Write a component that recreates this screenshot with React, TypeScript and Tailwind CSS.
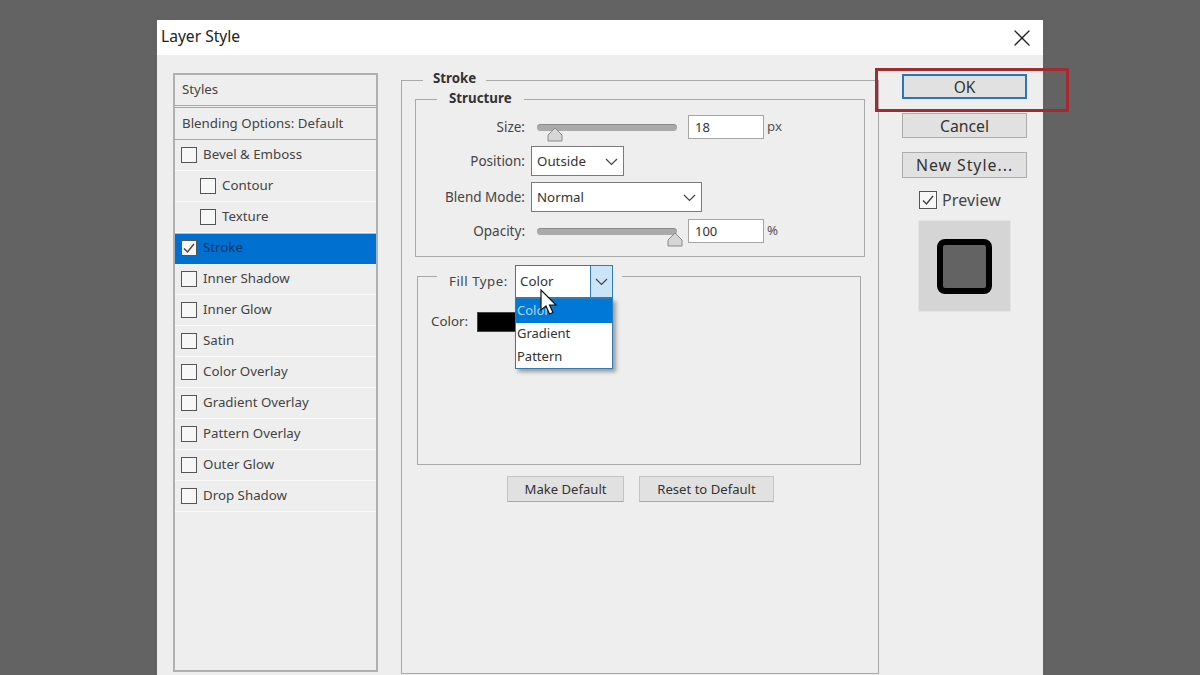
import { X } from 'lucide-react';

const font = 'font-["Noto_Sans",sans-serif]';

interface StyleRow {
  label: string;
  indent?: boolean;
  checked?: boolean;
  active?: boolean;
}

const rows: StyleRow[] = [
  { label: 'Bevel & Emboss' },
  { label: 'Contour', indent: true },
  { label: 'Texture', indent: true },
  { label: 'Stroke', checked: true, active: true },
  { label: 'Inner Shadow' },
  { label: 'Inner Glow' },
  { label: 'Satin' },
  { label: 'Color Overlay' },
  { label: 'Gradient Overlay' },
  { label: 'Pattern Overlay' },
  { label: 'Outer Glow' },
  { label: 'Drop Shadow' },
];

const Check = ({ checked, size = 'h-[16px] w-[16px]' }: { checked?: boolean; size?: string }) => (
  <span className={`flex shrink-0 items-center justify-center border border-[#555555] bg-[#f7f7f7] ${size}`}>
    {checked && (
      <svg width="14" height="14" viewBox="0 0 14 14" fill="none">
        <path d="M2 7.5 L5.5 11 L12 3" stroke="#444444" strokeWidth="1.4" />
      </svg>
    )}
  </span>
);

const Chevron = () => (
  <svg width="13" height="8" viewBox="0 0 13 8" fill="none">
    <path d="M1 1 L6.5 6.5 L12 1" stroke="#444444" strokeWidth="1.2" />
  </svg>
);

const StyleItem = ({ row }: { row: StyleRow }) => (
  <div
    className={`flex h-[31px] items-center border-b ${row.indent ? 'pl-[25px]' : 'pl-[6px]'} ${
      row.active
        ? 'border-[#0070d0] border-t border-t-[#8cc8f0] bg-[#0070d0] pb-[1px] text-[#12345f]'
        : 'border-[#fafafa] text-[#444444]'
    }`}
  >
    <Check checked={row.checked} />
    <span className="ml-[6px]">{row.label}</span>
  </div>
);

const Slider = ({ thumb }: { thumb: 'left' | 'right' }) => (
  <div className="relative ml-[12px] h-[7px] w-[140px] rounded-full border-t border-[#8a8a8a] bg-[#aaaaaa]">
    <svg
      className={`absolute top-[2px] ${thumb === 'left' ? 'left-[10px]' : 'left-[130px] top-[3px]'}`}
      width="16"
      height="15"
      viewBox="0 0 16 15"
    >
      <path d="M8 1 L15 8 V14 H1 V8 Z" fill="#d6d6d6" stroke="#8a8a8a" />
    </svg>
  </div>
);

const Field = ({ value, unit }: { value: string; unit: string }) => (
  <>
    <div className="ml-[11px] flex h-[24px] w-[76px] items-center border border-[#a5a5a5] bg-white pl-[6px] pt-[1px] text-[13px] text-[#333333]">
      {value}
    </div>
    <span className="ml-[3px] text-[#555555]">{unit}</span>
  </>
);

const Label = ({ children }: { children: string }) => (
  <span className="w-[109px] shrink-0 text-right text-[13.5px] text-[#444444]">{children}</span>
);

const Select = ({ value, width }: { value: string; width: string }) => (
  <div className={`ml-[6px] flex h-[30px] items-center justify-between border border-[#7a7a7a] bg-white pl-[5px] pr-[5px] pt-[2px] text-[#333333] ${width}`}>
    {value}
    <Chevron />
  </div>
);

const PushButton = ({ label, className }: { label: string; className: string }) => (
  <div className={`flex items-center justify-center border bg-[#e1e1e1] text-[#333333] ${className}`}>{label}</div>
);

export default function App() {
  return (
    <div className={`relative h-[675px] w-[1200px] overflow-hidden bg-[#636363] pl-[157px] pt-[20px] text-[13.3px] ${font}`}>
      <div className="flex h-[655px] w-[886px] flex-col bg-[#eeeeee]">
        <div className="flex h-[35px] shrink-0 items-center justify-between bg-white pl-[4px] pr-[7px]">
          <span className="pb-[2px] text-[15.6px] text-[#222222]">Layer Style</span>
          <X size={28} strokeWidth={1.1} className="text-[#222222]" />
        </div>

        <div className="flex flex-1">
          {/* styles list */}
          <div className="ml-[16px] mt-[18px] h-[599px] w-[205px] border-2 border-[#b0b0b0]">
            <div className="flex h-[33px] items-center border-b-[3px] border-double border-[#a8a8a8] pl-[7px] text-[#444444]">Styles</div>
            <div className="flex h-[32px] items-center border-b border-[#a8a8a8] pl-[7px] text-[#444444]">Blending Options: Default</div>
            {rows.map((row) => (
              <StyleItem key={row.label} row={row} />
            ))}
          </div>

          {/* stroke panel */}
          <div className="ml-[23px] mt-[17px] w-[478px]">
            <fieldset className="h-[602px] border border-[#a8a8a8]">
              <legend className="ml-[21px] h-[16px] px-[10px] font-bold leading-[12px] text-[#333333]">Stroke</legend>

              <fieldset className="ml-[13px] mt-[3px] h-[166px] w-[450px] border border-[#a8a8a8]">
                <legend className="ml-[21px] h-[16px] px-[12px] font-bold leading-[14px] text-[#333333]">Structure</legend>
                <div className="mt-[8px] flex h-[24px] items-center">
                  <Label>Size:</Label>
                  <Slider thumb="left" />
                  <Field value="18" unit="px" />
                </div>
                <div className="mt-[7px] flex items-center">
                  <Label>Position:</Label>
                  <Select value="Outside" width="w-[93px]" />
                </div>
                <div className="mt-[6px] flex items-center">
                  <Label>Blend Mode:</Label>
                  <Select value="Normal" width="w-[171px]" />
                </div>
                <div className="mt-[7px] flex h-[24px] items-center">
                  <Label>Opacity:</Label>
                  <Slider thumb="right" />
                  <Field value="100" unit="%" />
                </div>
              </fieldset>

              <fieldset className="ml-[15px] mt-[8px] h-[200px] w-[444px] border border-[#a8a8a8]">
                <legend className="ml-[19px] flex h-[22px] w-[185px] pl-[12px]">
                  <span className="mt-[6px] w-[66px] leading-[20px] tracking-[0.5px] text-[#444444]">Fill Type:</span>
                  <div className="relative z-10 flex h-[33px] w-[98px] shrink-0 border border-[#2f7cb8] bg-white">
                    <span className="flex w-[74px] items-center pl-[4px] text-[#333333]">Color</span>
                    <span className="flex flex-1 items-center justify-center border-l border-[#2f7cb8] bg-[#cce4f7]">
                      <Chevron />
                    </span>
                    <div className="absolute left-[-1px] top-[32px] w-[98px] border border-[#2f7cb8] bg-white text-[13px] text-[#333333] shadow-[3px_3px_4px_rgba(0,0,0,0.35)]">
                      <div className="flex h-[24px] items-center bg-[#0078d7] pl-[1px] text-[#a8d8f8]">Color</div>
                      <div className="flex h-[22px] items-center pl-[1px]">Gradient</div>
                      <div className="flex h-[23px] items-center pl-[1px]">Pattern</div>
                    </div>
                    <svg className="absolute left-[24px] top-[23px]" width="18" height="27" viewBox="0 0 18 27">
                      <path d="M1 1 V21 L6 17 L9.5 25 L13 23.5 L9.5 16 H16 Z" fill="#ffffff" stroke="#111111" strokeWidth="1.2" />
                    </svg>
                  </div>
                </legend>
                <div className="mt-[25px] flex h-[20px] items-center pl-[13px]">
                  <span className="w-[46px] text-[#444444]">Color:</span>
                  <span className="h-[20px] w-[40px] border border-[#444444] bg-black" />
                </div>
              </fieldset>

              <div className="ml-[105px] mt-[11px] flex gap-[15px]">
                <PushButton label="Make Default" className="h-[26px] w-[117px] border-[#c4c4c4] border-b-[#a8a8a8] pt-[1px] text-[13.1px]" />
                <PushButton label="Reset to Default" className="h-[26px] w-[135px] border-[#c4c4c4] border-b-[#a8a8a8] pt-[1px] text-[13.1px]" />
              </div>
            </fieldset>
          </div>

          {/* buttons */}
          <div className="ml-[23px] mt-[19px] flex w-[125px] flex-col">
            <PushButton label="OK" className="h-[25px] border-2 border-[#2a75c0] pt-[2px] text-[15.5px]" />
            <PushButton label="Cancel" className="mt-[14px] h-[25px] border-[#adadad] pt-[2px] text-[15.8px]" />
            <PushButton label="New Style..." className="mt-[14px] h-[26px] border-[#adadad] pt-[2px] text-[15.8px] tracking-[1px]" />
            <div className="ml-[17px] mt-[12px] flex h-[18px] items-center gap-[5px] pt-[1px] text-[16px] tracking-[0.1px] text-[#444444]">
              <Check checked size="h-[18px] w-[18px]" />
              Preview
            </div>
            <div className="ml-[16px] mt-[12px] flex h-[92px] w-[93px] items-center justify-center border border-[#e4e4e4] bg-[#d5d5d5]">
              <div className="h-[55px] w-[55px] rounded-[8px] border-[6px] border-black bg-[#636363]" />
            </div>
          </div>
        </div>
      </div>

      {/* annotation around OK */}
      <div className="absolute left-[875px] top-[68px] h-[44px] w-[194px] border-[3px] border-[#a32a2f]" />
    </div>
  );
}
